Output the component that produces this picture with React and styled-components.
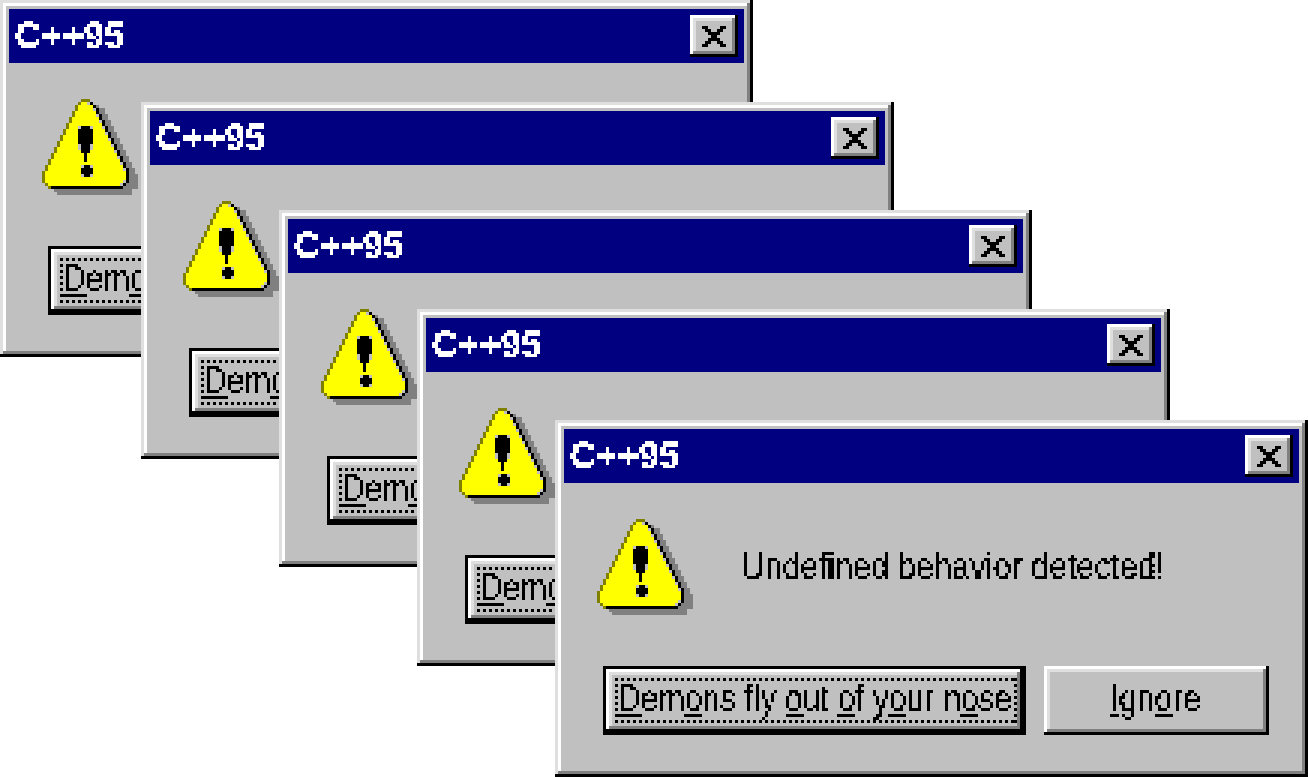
import React from 'react';
import styled, { createGlobalStyle } from 'styled-components';

const GlobalStyle = createGlobalStyle`
    html, body {
        margin: 0;
        background: #fff;
        overflow: hidden;
    }
`;

const bevel = (light) => `
    box-shadow: inset -3px -3px 0 #000, inset 3px 3px 0 ${light[0]}, inset -6px -6px 0 #808080, inset 6px 6px 0 ${light[1]};
`;

const Desktop = styled.div`
    position: relative;
    width: 1308px;
    height: 777px;
    overflow: hidden;
    font-family: 'Liberation Sans', Arial, sans-serif;
    font-variant-ligatures: none;
`;

const FilterDefs = styled.svg`
    position: absolute;
    width: 0;
    height: 0;
`;

const Window = styled.div`
    position: absolute;
    left: ${(p) => p.$x}px;
    top: ${(p) => p.$y}px;
    box-sizing: border-box;
    width: 753px;
    height: 357px;
    padding: 9px;
    display: flex;
    flex-direction: column;
    background: #c0c0c0;
    ${bevel(['#dfdfdf', '#fff'])}
`;

const TitleBar = styled.div`
    height: 54px;
    flex: none;
    box-sizing: border-box;
    padding: 0 6px 0 6px;
    display: flex;
    align-items: center;
    justify-content: space-between;
    background: #000080;
`;

const Pixelated = styled.div`
    filter: url(#pixel);
    white-space: nowrap;
`;

const TitleText = styled(Pixelated)`
    width: 120px;
    height: 42px;
    line-height: 42px;
    font-size: 37px;
    font-weight: 700;
    color: #fff;
`;

const Squeezed = styled.span`
    display: inline-block;
    transform: scaleX(${(p) => p.$scale});
    transform-origin: left center;
`;

const CloseButton = styled.div`
    width: 48px;
    height: 42px;
    flex: none;
    display: flex;
    align-items: center;
    justify-content: center;
    background: #c0c0c0;
    ${bevel(['#fff', '#dfdfdf'])}
`;

const CloseGlyph = styled.svg`
    width: 24px;
    height: 21px;
    display: block;
    shape-rendering: crispEdges;
`;

const Content = styled.div`
    flex: 1;
    box-sizing: border-box;
    padding: 36px 30px 33px 33px;
    display: flex;
    flex-direction: column;
    justify-content: space-between;
`;

const MessageRow = styled.div`
    display: flex;
    align-items: center;
    gap: 48px;
`;

const IconBox = styled.svg`
    width: 96px;
    height: 96px;
    flex: none;
    display: block;
    shape-rendering: crispEdges;
`;

const Message = styled(Pixelated)`
    width: 450px;
    height: 42px;
    line-height: 42px;
    font-size: 37px;
    color: #000;
`;

const ButtonRow = styled.div`
    display: flex;
    gap: 18px;
    padding-left: 6px;
`;

const Button = styled.div`
    box-sizing: border-box;
    width: ${(p) => p.$width}px;
    height: 69px;
    flex: none;
    display: flex;
    align-items: stretch;
    justify-content: center;
    background: #c0c0c0;
    border: ${(p) => (p.$default ? '3px solid #000' : 'none')};
    padding: ${(p) => (p.$default ? '9px 6px 9px 9px' : '12px 9px')};
    ${bevel(['#fff', '#dfdfdf'])}
`;

const FocusRect = styled.div`
    flex: 1;
    display: flex;
    justify-content: center;
    background:
        repeating-linear-gradient(90deg, #000 0 3px, transparent 3px 6px) left top / 100% 3px no-repeat,
        repeating-linear-gradient(90deg, #000 0 3px, transparent 3px 6px) left bottom / 100% 3px no-repeat,
        repeating-linear-gradient(180deg, #000 0 3px, transparent 3px 6px) left top / 3px 100% no-repeat,
        repeating-linear-gradient(180deg, #000 0 3px, transparent 3px 6px) right top / 3px 100% no-repeat;
`;

const ButtonLabel = styled(Pixelated)`
    width: ${(p) => p.$width}px;
    height: 45px;
    line-height: 42px;
    font-size: 37px;
    color: #000;
    u {
        text-decoration-thickness: 3px;
        text-underline-offset: 4px;
    }
`;

const ICON_COLORS = { o: '#808000', y: '#ffff00', k: '#000000', g: '#808080', s: '#c0c0c0' };

const WARNING_ICON = [
    '.............ooo................',
    '............oyysk...............',
    '...........oyyyyykg.............',
    '...........oyyyyyskgg...........',
    '..........oyyyyyyykgg...........',
    '..........oyyyyyyyskgg..........',
    '.........oyyyyyyyyykgg..........',
    '.........oyyyyyyyyyskgg.........',
    '........oyyyyyyyyyyykgg.........',
    '........oyyyskkksyyyskgg........',
    '.......oyyyykkkkkyyyykgg........',
    '.......oyyyykkkkkyyyyskgg.......',
    '......oyyyyykkkkkyyyyykgg.......',
    '......oyyyyykkkkkyyyyyskgg......',
    '.....oyyyyyykkkkkyyyyyykgg......',
    '.....oyyyyyyskkksyyyyyyskgg.....',
    '....oyyyyyyyskkksyyyyyyykgg.....',
    '....oyyyyyyyykkkyyyyyyyyskgg....',
    '...oyyyyyyyyyykyyyyyyyyyykgg....',
    '...oyyyyyyyyyykyyyyyyyyyyskgg...',
    '..oyyyyyyyyyyykyyyyyyyyyyykgg...',
    '..oyyyyyyyyyyyyyyyyyyyyyyyskgg..',
    '.oyyyyyyyyyyyskksyyyyyyyyyykgg..',
    '.oyyyyyyyyyyykkkkyyyyyyyyyyskgg.',
    'oyyyyyyyyyyyykkkkyyyyyyyyyyykgg.',
    'oyyyyyyyyyyyyskksyyyyyyyyyyykggg',
    'oyyyyyyyyyyyyyyyyyyyyyyyyyyykggg',
    'oyyyyyyyyyyyyyyyyyyyyyyyyyyskggg',
    '.oyyyyyyyyyyyyyyyyyyyyyyyyskgggg',
    '..okkkkkkkkkkkkkkkkkkkkkkkkggggg',
    '....gggggggggggggggggggggggggg..',
    '.....ggggggggggggggggggggggggg..',
];

const CLOSE_ICON = ['xx....xx', '.xx..xx.', '..xxxx..', '...xx...', '..xxxx..', '.xx..xx.', 'xx....xx'];

// one path per colour, so the bitmap stays a single small drawing
const bitmapPath = (rows, char) => {
    let d = '';
    rows.forEach((row, y) => {
        [...row].forEach((c, x) => {
            if (c === char) d += `M${x} ${y}h1v1h-1z`;
        });
    });
    return d;
};

const WarningIcon = () => (
    <IconBox viewBox="0 0 32 32">
        {Object.keys(ICON_COLORS).map((c) => (
            <path key={c} d={bitmapPath(WARNING_ICON, c)} fill={ICON_COLORS[c]} />
        ))}
    </IconBox>
);

const CloseIcon = () => (
    <CloseGlyph viewBox="0 0 8 7">
        <path d={bitmapPath(CLOSE_ICON, 'x')} fill="#000" />
    </CloseGlyph>
);

const Dialog = ({ x, y }) => (
    <Window $x={x} $y={y}>
        <TitleBar>
            <TitleText>
                <Squeezed $scale={0.985}>C++95</Squeezed>
            </TitleText>
            <CloseButton>
                <CloseIcon />
            </CloseButton>
        </TitleBar>
        <Content>
            <MessageRow>
                <WarningIcon />
                <Message>
                    <Squeezed $scale={0.876}>Undefined behavior detected!</Squeezed>
                </Message>
            </MessageRow>
            <ButtonRow>
                <Button $width={423} $default>
                    <FocusRect>
                        <ButtonLabel $width={396}>
                            <Squeezed $scale={0.855}>
                                <u>D</u>em<u>o</u>ns fly <u>o</u>ut <u>o</u>f y<u>o</u>ur n<u>o</u>se
                            </Squeezed>
                        </ButtonLabel>
                    </FocusRect>
                </Button>
                <Button $width={225}>
                    <ButtonLabel $width={93}>
                        <Squeezed $scale={0.87}>
                            <u>I</u>gn<u>o</u>re
                        </Squeezed>
                    </ButtonLabel>
                </Button>
            </ButtonRow>
        </Content>
    </Window>
);

const WINDOWS = [
    { x: 0, y: 0 },
    { x: 141, y: 102 },
    { x: 279, y: 210 },
    { x: 417, y: 309 },
    { x: 555, y: 420 },
];

export default function App() {
    return (
        <Desktop>
            <GlobalStyle />
            <FilterDefs>
                <filter id="pixel" x="0" y="0" width="1" height="1" colorInterpolationFilters="sRGB">
                    <feFlood x="1" y="1" width="1" height="1" floodColor="#000" />
                    <feComposite width="3" height="3" />
                    <feTile result="grid" />
                    <feComposite in="SourceGraphic" in2="grid" operator="in" />
                    <feMorphology operator="dilate" radius="1" />
                    <feComponentTransfer>
                        <feFuncA type="discrete" tableValues="0 1 1" />
                    </feComponentTransfer>
                </filter>
            </FilterDefs>
            {WINDOWS.map((w) => (
                <Dialog key={w.x} x={w.x} y={w.y} />
            ))}
        </Desktop>
    );
}
